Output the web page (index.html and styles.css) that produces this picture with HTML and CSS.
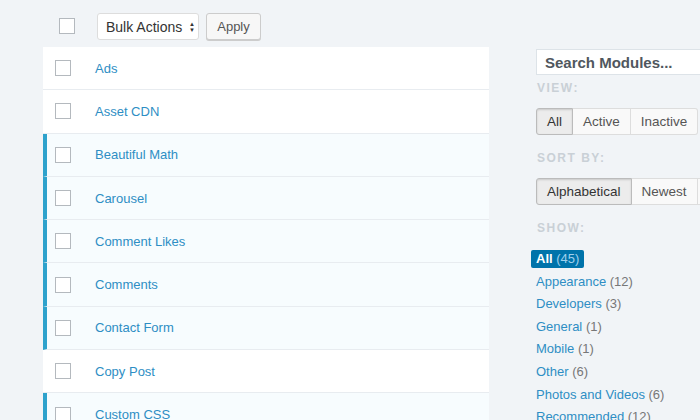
FILE: index.html
```html
<!DOCTYPE html>
<html>
<head>
    <title>Modules</title>
    <link rel="stylesheet" href="styles.css">
</head>
<body>
    <div class="page">
        <div class="main">
            <div class="toolbar">
                <span class="checkbox top-check"></span>
                <div class="select">Bulk Actions <span class="arrows">&#9650;<br>&#9660;</span></div>
                <button class="btn-apply">Apply</button>
            </div>

            <div class="table">
                <div class="row"><span class="checkbox"></span><a class="name">Ads</a></div>
                <div class="row"><span class="checkbox"></span><a class="name">Asset CDN</a></div>
                <div class="row active"><span class="checkbox"></span><a class="name">Beautiful Math</a></div>
                <div class="row active"><span class="checkbox"></span><a class="name">Carousel</a></div>
                <div class="row active"><span class="checkbox"></span><a class="name">Comment Likes</a></div>
                <div class="row active"><span class="checkbox"></span><a class="name">Comments</a></div>
                <div class="row active"><span class="checkbox"></span><a class="name">Contact Form</a></div>
                <div class="row"><span class="checkbox"></span><a class="name">Copy Post</a></div>
                <div class="row active"><span class="checkbox"></span><a class="name">Custom CSS</a></div>
            </div>
        </div>

        <div class="sidebar">
            <div class="search">Search Modules...</div>

            <div class="label label-view">View:</div>
            <div class="btn-group">
                <span class="seg pressed">All</span><span class="seg">Active</span><span class="seg">Inactive</span>
            </div>

            <div class="label">Sort by:</div>
            <div class="btn-group">
                <span class="seg pressed">Alphabetical</span><span class="seg">Newest</span><span class="seg seg-more"></span>
            </div>

            <div class="label">Show:</div>
            <ul class="filters">
                <li><span class="current">All <span class="count">(45)</span></span></li>
                <li><a>Appearance</a> <span class="count">(12)</span></li>
                <li><a>Developers</a> <span class="count">(3)</span></li>
                <li><a>General</a> <span class="count">(1)</span></li>
                <li><a>Mobile</a> <span class="count">(1)</span></li>
                <li><a>Other</a> <span class="count">(6)</span></li>
                <li><a>Photos and Videos</a> <span class="count">(6)</span></li>
                <li><a>Recommended</a> <span class="count">(12)</span></li>
            </ul>
        </div>
    </div>
</body>
</html>
```

FILE: styles.css
```css
* {
    box-sizing: border-box;
    margin: 0;
    padding: 0;
}

body {
    background: #f1f4f7;
    font-family: "Liberation Sans", Arial, sans-serif;
    font-size: 13px;
    color: #555;
    overflow: hidden;
    height: 420px;
}

.page {
    display: flex;
    padding-left: 43px;
    gap: 47px;
}

.main {
    width: 446px;
    flex-shrink: 0;
}

.toolbar {
    height: 47px;
    display: flex;
    align-items: flex-start;
    padding-top: 13px;
}

.checkbox {
    display: inline-block;
    width: 16px;
    height: 16px;
    background: #fff;
    border: 1px solid #b4b9be;
    flex-shrink: 0;
}

.top-check {
    margin: 5px 22px 0 16px;
}

.select {
    width: 102px;
    height: 27px;
    background: #fff;
    border: 1px solid #ddd;
    border-radius: 3px;
    display: flex;
    align-items: center;
    justify-content: space-between;
    padding: 0 3px 0 8px;
    font-size: 14px;
    color: #333;
}

.arrows {
    font-size: 6px;
    line-height: 6px;
    color: #333;
    text-align: center;
}

.btn-apply {
    margin-left: 7px;
    width: 55px;
    height: 27px;
    background: #f7f7f7;
    border: 1px solid #ccc;
    border-radius: 3px;
    box-shadow: 0 1px 0 #ccc;
    font-family: inherit;
    font-size: 13px;
    color: #555;
}

.table {
    background: #fff;
}

.row {
    height: 43.3px;
    display: flex;
    align-items: center;
    padding-left: 12px;
    border-bottom: 1px solid #e8ecf0;
    background: #fff;
}

.row.active {
    background: #f7fcfe;
    border-left: 4px solid #2ea2cc;
    padding-left: 8px;
}

.name {
    margin-left: 24px;
    color: #2e8ec4;
    font-size: 13px;
}

.sidebar {
    width: 200px;
    flex-shrink: 0;
    padding-top: 49px;
}

.search {
    height: 26px;
    background: #fff;
    border: 1px solid #dde3e8;
    padding: 4px 8px;
    font-size: 15px;
    font-weight: bold;
    color: #50575e;
}

.label {
    text-transform: uppercase;
    font-size: 12px;
    font-weight: bold;
    letter-spacing: 1.5px;
    color: #c9d0d6;
    margin: 16px 0 13px 1px;
}

.label-view {
    margin-top: 6px;
}

.btn-group {
    display: flex;
    height: 27px;
}

.seg {
    display: inline-flex;
    align-items: center;
    padding: 0 10px;
    background: #f9f9f9;
    border: 1px solid #ddd;
    border-left: none;
    font-size: 13.5px;
    color: #555;
    white-space: nowrap;
}

.seg:first-child {
    border-left: 1px solid #ccc;
    border-radius: 3px 0 0 3px;
}

.seg:last-child {
    border-radius: 0 3px 3px 0;
}

.seg-more {
    width: 40px;
}

.seg.pressed {
    background: #ececec;
    border-color: #bbb;
    box-shadow: inset 0 1px 2px rgba(0, 0, 0, 0.15);
    color: #333;
}

.filters {
    list-style: none;
    margin-top: 12px;
}

.filters li {
    height: 22.6px;
    line-height: 22.6px;
    font-size: 13px;
    white-space: nowrap;
}

.filters a {
    color: #2e8ec4;
}

.count {
    color: #777;
}

.current {
    display: inline-block;
    margin-left: -5px;
    background: #0073aa;
    color: #fff;
    font-weight: bold;
    padding: 0 5px;
    line-height: 18px;
    border-radius: 2px;
}

.current .count {
    color: #9fd0ec;
    font-weight: normal;
}
```
